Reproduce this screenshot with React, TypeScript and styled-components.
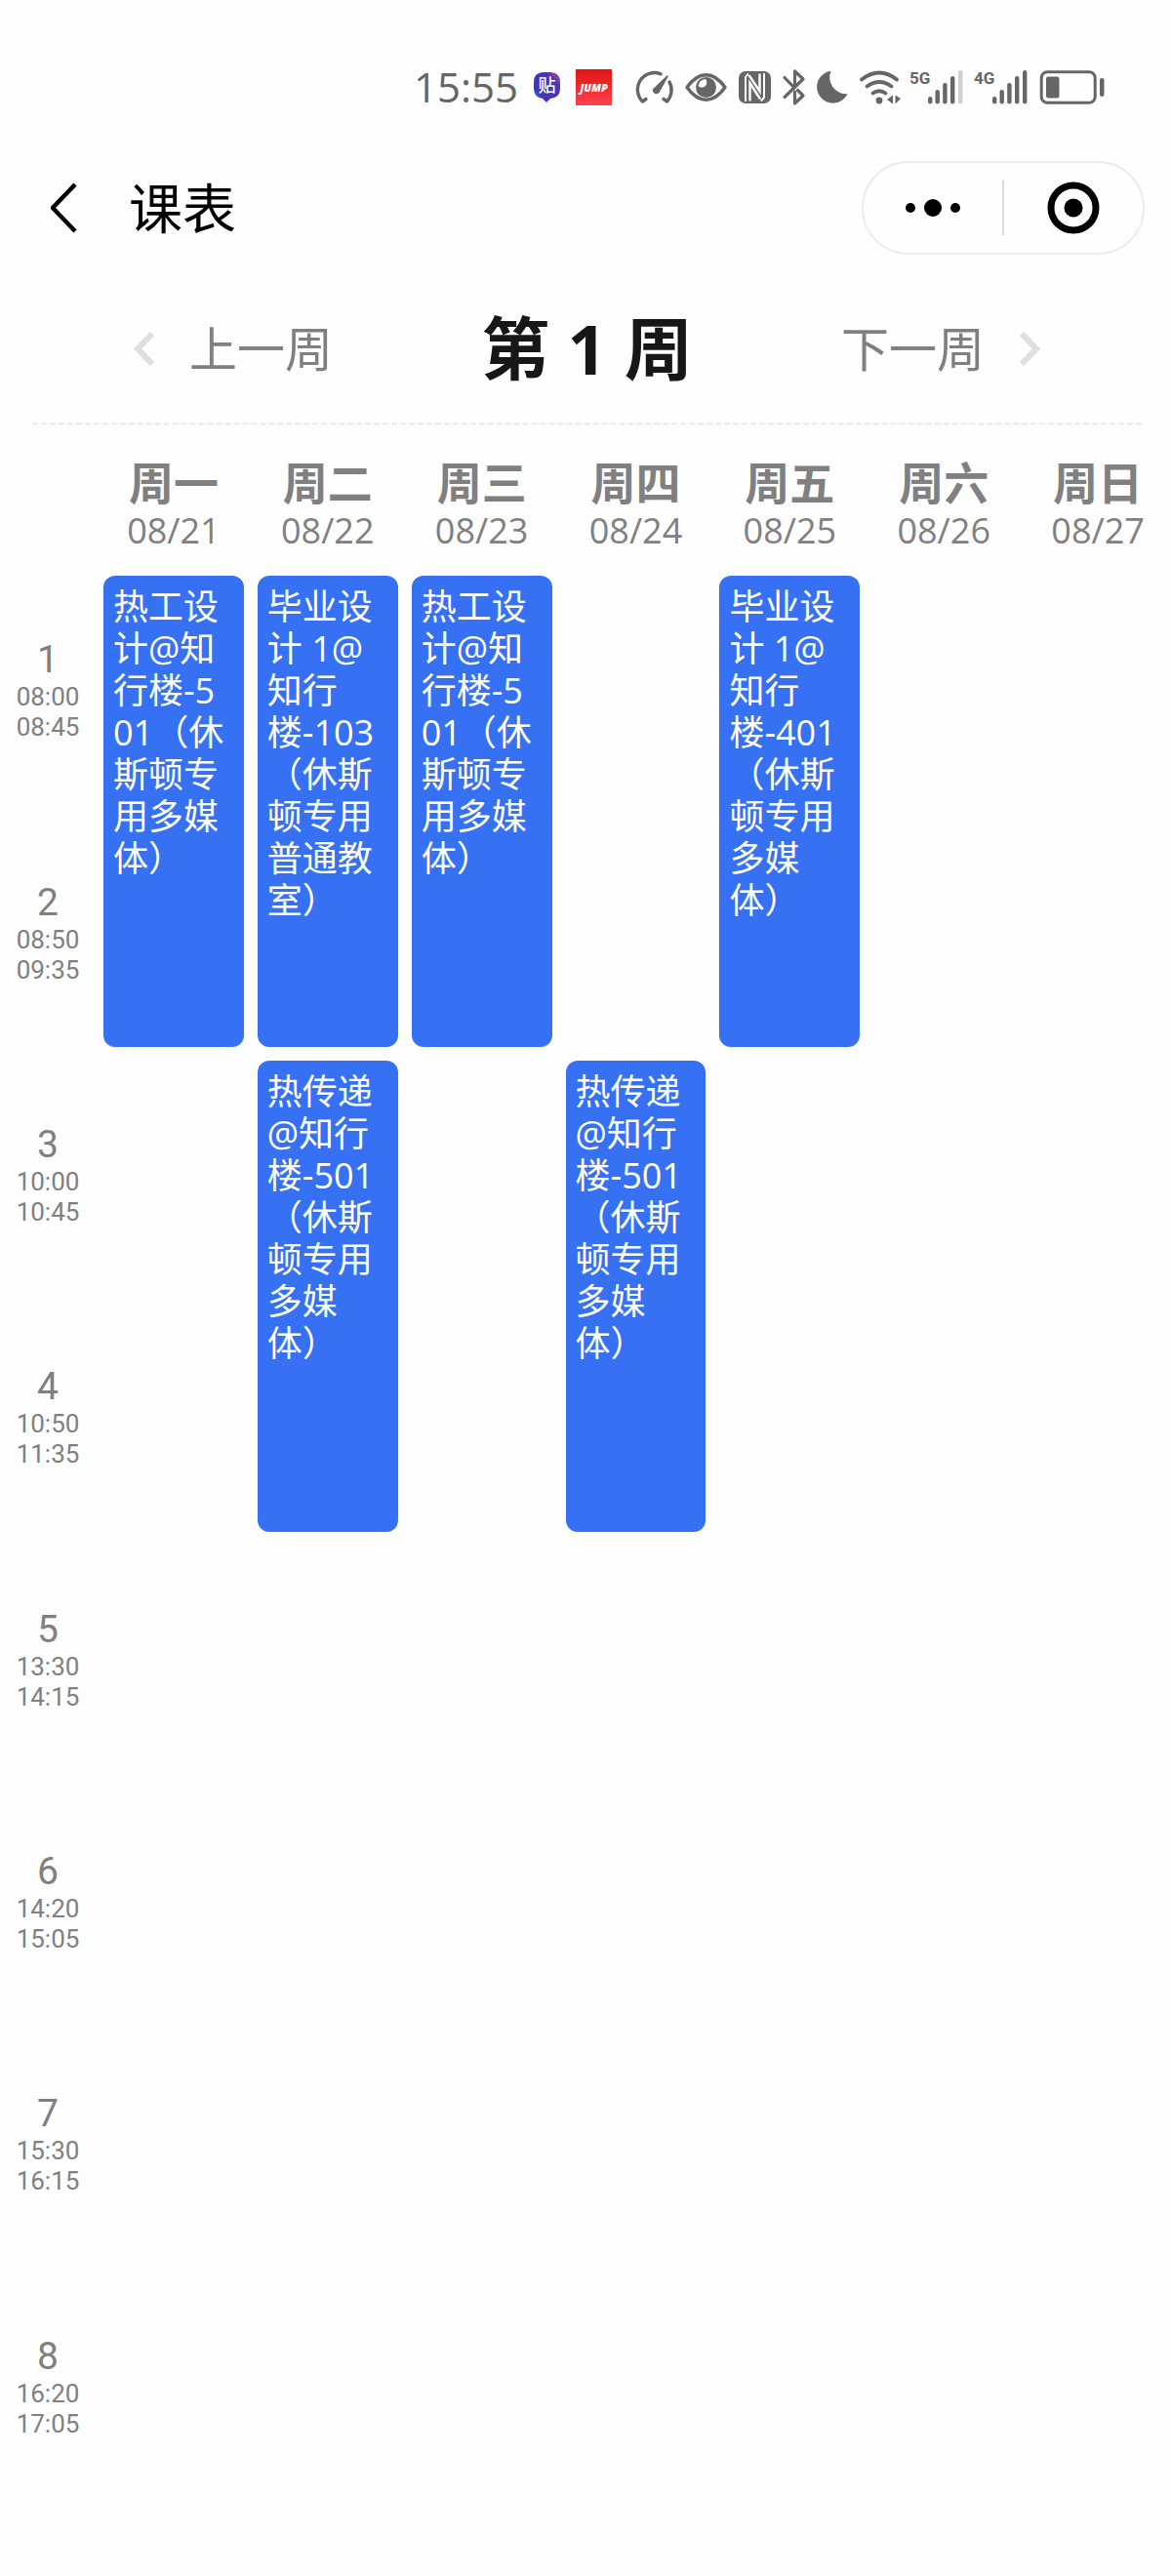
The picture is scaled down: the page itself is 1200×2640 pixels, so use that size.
import React from 'react';
import styled, { createGlobalStyle } from 'styled-components';

const GlobalStyle = createGlobalStyle`
  * { box-sizing: border-box; }
  body {
    margin: 0;
    background: #fefefe;
    font-family: "Open Sans", "Noto Sans CJK SC", sans-serif;
    text-spacing-trim: space-all;
  }
  button {
    margin: 0;
    padding: 0;
    border: 0;
    background: none;
    font: inherit;
    color: inherit;
    cursor: pointer;
  }
`;

const Page = styled.main`
  display: flex;
  flex-direction: column;
  min-height: 100vh;
`;

const StatusBar = styled.div`
  display: flex;
  align-items: center;
  justify-content: flex-end;
  gap: 25px;
  padding: 60px 67px 0;
  color: #666;
`;

const StatusGroup = styled.div<{ $gap: number }>`
  display: flex;
  align-items: center;
  gap: ${(p) => p.$gap}px;
  svg { display: block; overflow: visible; }
`;

const Clock = styled.time`
  font-size: 42px;
  line-height: 58px;
`;

const NavBar = styled.header`
  display: flex;
  align-items: center;
  padding: 47px 27px 0 46px;
`;

const BackButton = styled.button`
  display: flex;
  padding: 0 6px;
`;

const PageTitle = styled.h1`
  flex: 1;
  margin: 0 0 0 46px;
  font-size: 55px;
  font-weight: 400;
  line-height: 72px;
  color: #000;
`;

const Capsule = styled.div`
  display: flex;
  align-items: center;
  width: 290px;
  height: 96px;
  border: 2px solid #ebebeb;
  border-radius: 48px;
`;

const CapsuleButton = styled.button`
  flex: 1;
  display: flex;
  justify-content: center;
  align-items: center;
  height: 100%;
`;

const CapsuleDivider = styled.span`
  width: 2px;
  height: 56px;
  background: #dcdcdc;
`;

const WeekBar = styled.nav`
  display: flex;
  align-items: center;
  justify-content: space-between;
  margin: 0 30px 0 33px;
  padding: 48px 104px 28px;
  border-bottom: 3px dashed #f0f0f0;
`;

const WeekButton = styled.button`
  display: flex;
  align-items: center;
  gap: 36px;
  font-size: 49px;
  line-height: 64px;
  color: #808080;
`;

const WeekTitle = styled.h2`
  margin: 0;
  font-size: 70px;
  font-weight: 700;
  line-height: 96px;
  color: #171717;
`;

const Timetable = styled.table`
  display: grid;
  grid-template-columns: 86px repeat(7, minmax(0, 1fr));
  grid-template-rows: auto repeat(8, 1fr);
  gap: 14px;
  min-height: 2096px;
  padding: 0 3px 0 6px;
  margin-top: 31px;
  color: #808080;
  thead, tbody, tr { display: contents; }
  th, td { padding: 0; font-weight: 400; }
`;

const DayHead = styled.th`
  && { padding-bottom: 9px; }
  display: flex;
  flex-direction: column;
  align-items: center;
`;

const DayName = styled.span`
  font-size: 46px;
  font-weight: 700;
  line-height: 54px;
`;

const DayDate = styled.span`
  font-size: 36px;
  line-height: 46px;
`;

const PeriodHead = styled.th<{ $row: number }>`
  grid-column: 1;
  grid-row: ${(p) => p.$row};
  display: flex;
  flex-direction: column;
  align-items: center;
  justify-content: center;
  font-family: Roboto, "Open Sans", sans-serif;
`;

const PeriodNumber = styled.span`
  font-size: 39px;
  line-height: 46px;
`;

const PeriodTime = styled.span`
  font-size: 26px;
  line-height: 31px;
`;

const Cell = styled.td<{ $row: number; $col: number }>`
  grid-column: ${(p) => p.$col};
  grid-row: ${(p) => p.$row} / span ${(p) => p.rowSpan ?? 1};
  display: flex;
`;

const Course = styled.div`
  flex: 1;
  padding: 10px;
  border-radius: 12px;
  background: #3671f3;
  color: #fff;
  font-size: 36px;
  line-height: 43px;
  white-space: pre;
`;

const days = [
  ['周一', '08/21'],
  ['周二', '08/22'],
  ['周三', '08/23'],
  ['周四', '08/24'],
  ['周五', '08/25'],
  ['周六', '08/26'],
  ['周日', '08/27'],
];

const periods = [
  ['08:00', '08:45'],
  ['08:50', '09:35'],
  ['10:00', '10:45'],
  ['10:50', '11:35'],
  ['13:30', '14:15'],
  ['14:20', '15:05'],
  ['15:30', '16:15'],
  ['16:20', '17:05'],
];

const thermal = '热工设\n计@知\n行楼-5\n01（休\n斯顿专\n用多媒\n体）';
const transfer = '热传递\n@知行\n楼-501\n（休斯\n顿专用\n多媒\n体）';

const courses = [
  { day: 0, start: 0, span: 2, text: thermal },
  { day: 1, start: 0, span: 2, text: '毕业设\n计 1@\n知行\n楼-103\n（休斯\n顿专用\n普通教\n室）' },
  { day: 2, start: 0, span: 2, text: thermal },
  { day: 4, start: 0, span: 2, text: '毕业设\n计 1@\n知行\n楼-401\n（休斯\n顿专用\n多媒\n体）' },
  { day: 1, start: 2, span: 2, text: transfer },
  { day: 3, start: 2, span: 2, text: transfer },
];

const TiebaLogo = () => (
  <svg width="27" height="31" viewBox="0 0 27 31">
    <defs>
      <linearGradient id="tieba" x1="1" y1="0" x2="0" y2="1">
        <stop offset="0" stopColor="#e0508c" />
        <stop offset="0.25" stopColor="#4b35b0" />
        <stop offset="0.75" stopColor="#4038b8" />
        <stop offset="1" stopColor="#35b6f5" />
      </linearGradient>
    </defs>
    <path d="M10 0H17Q27 0 27 10V17Q27 26 17 27L13 31L9 27Q0 26 0 17V10Q0 0 10 0Z" fill="url(#tieba)" />
    <text x="13.5" y="20" fontSize="18" fontWeight="500" textAnchor="middle" fill="#fff">贴</text>
  </svg>
);

const JumpLogo = () => (
  <svg width="37" height="37" viewBox="0 0 37 37">
    <defs>
      <linearGradient id="jump" x1="0" y1="0" x2="0" y2="1">
        <stop offset="0" stopColor="#e3120f" />
        <stop offset="1" stopColor="#fb4450" />
      </linearGradient>
    </defs>
    <rect width="37" height="37" fill="url(#jump)" />
    <text x="18.5" y="22.5" fontSize="11" fontWeight="800" fontStyle="italic" textAnchor="middle" fill="#fff">JUMP</text>
  </svg>
);

const GaugeIcon = () => (
  <svg width="38" height="33" viewBox="0 0 38 33" fill="none" stroke="currentColor" strokeWidth="3.4" strokeLinecap="round" strokeLinejoin="round">
    <path d="M10 28.5L6.5 31A17.2 17.2 0 0 1 25 2.8" />
    <path d="M34 11A17.2 17.2 0 0 1 31.5 31L28 28.5" />
    <path d="M32 5L22.8 21.5A3 3 0 0 1 17.8 18.5Z" fill="currentColor" strokeWidth="1.6" />
  </svg>
);

const EyeIcon = () => (
  <svg width="43" height="29" viewBox="0 0 43 29">
    <path d="M2 14.5C8 6 14 1.8 21.5 1.8S35 6 41 14.5C35 23 29 27.2 21.5 27.2S8 23 2 14.5Z" fill="none" stroke="currentColor" strokeWidth="3.4" strokeLinejoin="round" />
    <circle cx="21.5" cy="14.5" r="10.5" fill="currentColor" />
    <path d="M21 6A5 5 0 0 1 13.5 13A8.5 8.5 0 0 1 21 6Z" fill="#fefefe" />
  </svg>
);

const NfcIcon = () => (
  <svg width="33" height="33" viewBox="0 0 33 33">
    <rect width="33" height="33" rx="7" fill="currentColor" />
    <path d="M11.5 30.5V12L22 28.5M10.5 4L21.5 20.5V2.5" fill="none" stroke="#fefefe" strokeWidth="2.4" />
    <path d="M7 31V6L9.8 2.5M26 2V27L22.8 30.5" fill="none" stroke="#fefefe" strokeWidth="2" />
  </svg>
);

const BluetoothIcon = () => (
  <svg width="23" height="37" viewBox="0 0 23 37" fill="none" stroke="currentColor" strokeWidth="3.2" strokeLinecap="round" strokeLinejoin="round">
    <path d="M2 8.5L11.5 18.5M2 28.5L21 10L12.5 2V16M12.5 23V35L21 27L15.5 21.5" />
  </svg>
);

const MoonIcon = () => (
  <svg width="32" height="35" viewBox="0 0 32 35">
    <path d="M14.5 .8A16.5 16.5 0 1 0 31.5 24.3A17 17 0 0 1 14.5 .8Z" fill="currentColor" />
  </svg>
);

const WifiIcon = () => (
  <svg width="40" height="35" viewBox="0 0 40 35">
    <g fill="none" stroke="currentColor" strokeWidth="3.8" strokeLinecap="round">
      <path d="M2 9.5Q20 -4.5 38 9.5" />
      <path d="M7.5 16.5Q20 7.5 32.5 16.5" />
      <path d="M13.5 23.5Q20 19 26.5 23.5" />
    </g>
    <circle cx="20" cy="31" r="3.4" fill="currentColor" />
    <path d="M34 25.5V34.5L28 30ZM36.5 25.5V34.5L42 29Z" fill="currentColor" />
  </svg>
);

const bars = [
  [18, 27],
  [25.5, 20],
  [33.2, 13],
  [41, 6],
  [49, 0],
];

const SignalIcon = ({ label, strength }: { label: string; strength: number }) => (
  <svg width="54" height="35" viewBox="0 0 54 35">
    <text x="-1" y="14" fontSize="17" fontWeight="700" fontFamily="Roboto, sans-serif" fill="currentColor">
      {label}
    </text>
    {bars.map(([x, y], i) => (
      <rect key={x} x={x} y={y} width="4.4" height={34.5 - y} rx="2.2" fill={i < strength ? 'currentColor' : '#cfcfcf'} />
    ))}
  </svg>
);

const BatteryIcon = () => (
  <svg width="68" height="35" viewBox="0 0 68 35">
    <rect x="2.2" y="1.7" width="55" height="31.5" rx="6" fill="none" stroke="currentColor" strokeWidth="3" />
    <rect x="7" y="6.5" width="13.5" height="22" rx="2.5" fill="currentColor" />
    <rect x="62" y="8" width="4.5" height="19" rx="2.2" fill="currentColor" />
  </svg>
);

const Chevron = ({ next }: { next?: boolean }) => (
  <svg width="21" height="35" viewBox="0 0 21 35" fill="none" stroke="#dedee3" strokeWidth="6">
    <path d={next ? 'M2 2L17 17.5L2 33' : 'M19 2L4 17.5L19 33'} />
  </svg>
);

function cellFor(day: number, period: number) {
  const course = courses.find((c) => c.day === day && period >= c.start && period < c.start + c.span);
  if (course && course.start !== period) return null;
  return (
    <Cell key={day} $row={period + 2} $col={day + 2} rowSpan={course?.span}>
      {course && <Course>{course.text}</Course>}
    </Cell>
  );
}

export default function App() {
  return (
    <Page lang="zh-CN">
      <GlobalStyle />
      <StatusBar>
        <StatusGroup $gap={16}>
          <Clock>15:55</Clock>
          <TiebaLogo />
          <JumpLogo />
        </StatusGroup>
        <StatusGroup $gap={12}>
          <GaugeIcon />
          <EyeIcon />
          <NfcIcon />
          <BluetoothIcon />
          <MoonIcon />
          <WifiIcon />
          <SignalIcon label="5G" strength={4} />
          <SignalIcon label="4G" strength={5} />
          <BatteryIcon />
        </StatusGroup>
      </StatusBar>

      <NavBar>
        <BackButton aria-label="返回">
          <svg width="28" height="52" viewBox="0 0 28 52" fill="none" stroke="#000" strokeWidth="4.5" strokeLinejoin="round">
            <path d="M25 2L2 26L25 50" />
          </svg>
        </BackButton>
        <PageTitle>课表</PageTitle>
        <Capsule>
          <CapsuleButton aria-label="更多">
            <svg width="56" height="18" viewBox="0 0 56 18">
              <circle cx="5" cy="9" r="5" />
              <circle cx="28" cy="9" r="9" />
              <circle cx="51" cy="9" r="5" />
            </svg>
          </CapsuleButton>
          <CapsuleDivider />
          <CapsuleButton aria-label="关闭">
            <svg width="54" height="54" viewBox="0 0 54 54">
              <circle cx="27" cy="27" r="23" fill="none" stroke="#000" strokeWidth="7" />
              <circle cx="27" cy="27" r="9.5" />
            </svg>
          </CapsuleButton>
        </Capsule>
      </NavBar>

      <WeekBar>
        <WeekButton>
          <Chevron />
          上一周
        </WeekButton>
        <WeekTitle>第 1 周</WeekTitle>
        <WeekButton>
          下一周
          <Chevron next />
        </WeekButton>
      </WeekBar>

      <Timetable>
        <thead>
          <tr>
            <td />
            {days.map(([name, date]) => (
              <DayHead key={date} scope="col">
                <DayName>{name}</DayName>
                <DayDate>{date}</DayDate>
              </DayHead>
            ))}
          </tr>
        </thead>
        <tbody>
          {periods.map(([from, to], period) => (
            <tr key={from}>
              <PeriodHead scope="row" $row={period + 2}>
                <PeriodNumber>{period + 1}</PeriodNumber>
                <PeriodTime>{from}</PeriodTime>
                <PeriodTime>{to}</PeriodTime>
              </PeriodHead>
              {days.map((_, day) => cellFor(day, period))}
            </tr>
          ))}
        </tbody>
      </Timetable>
    </Page>
  );
}
